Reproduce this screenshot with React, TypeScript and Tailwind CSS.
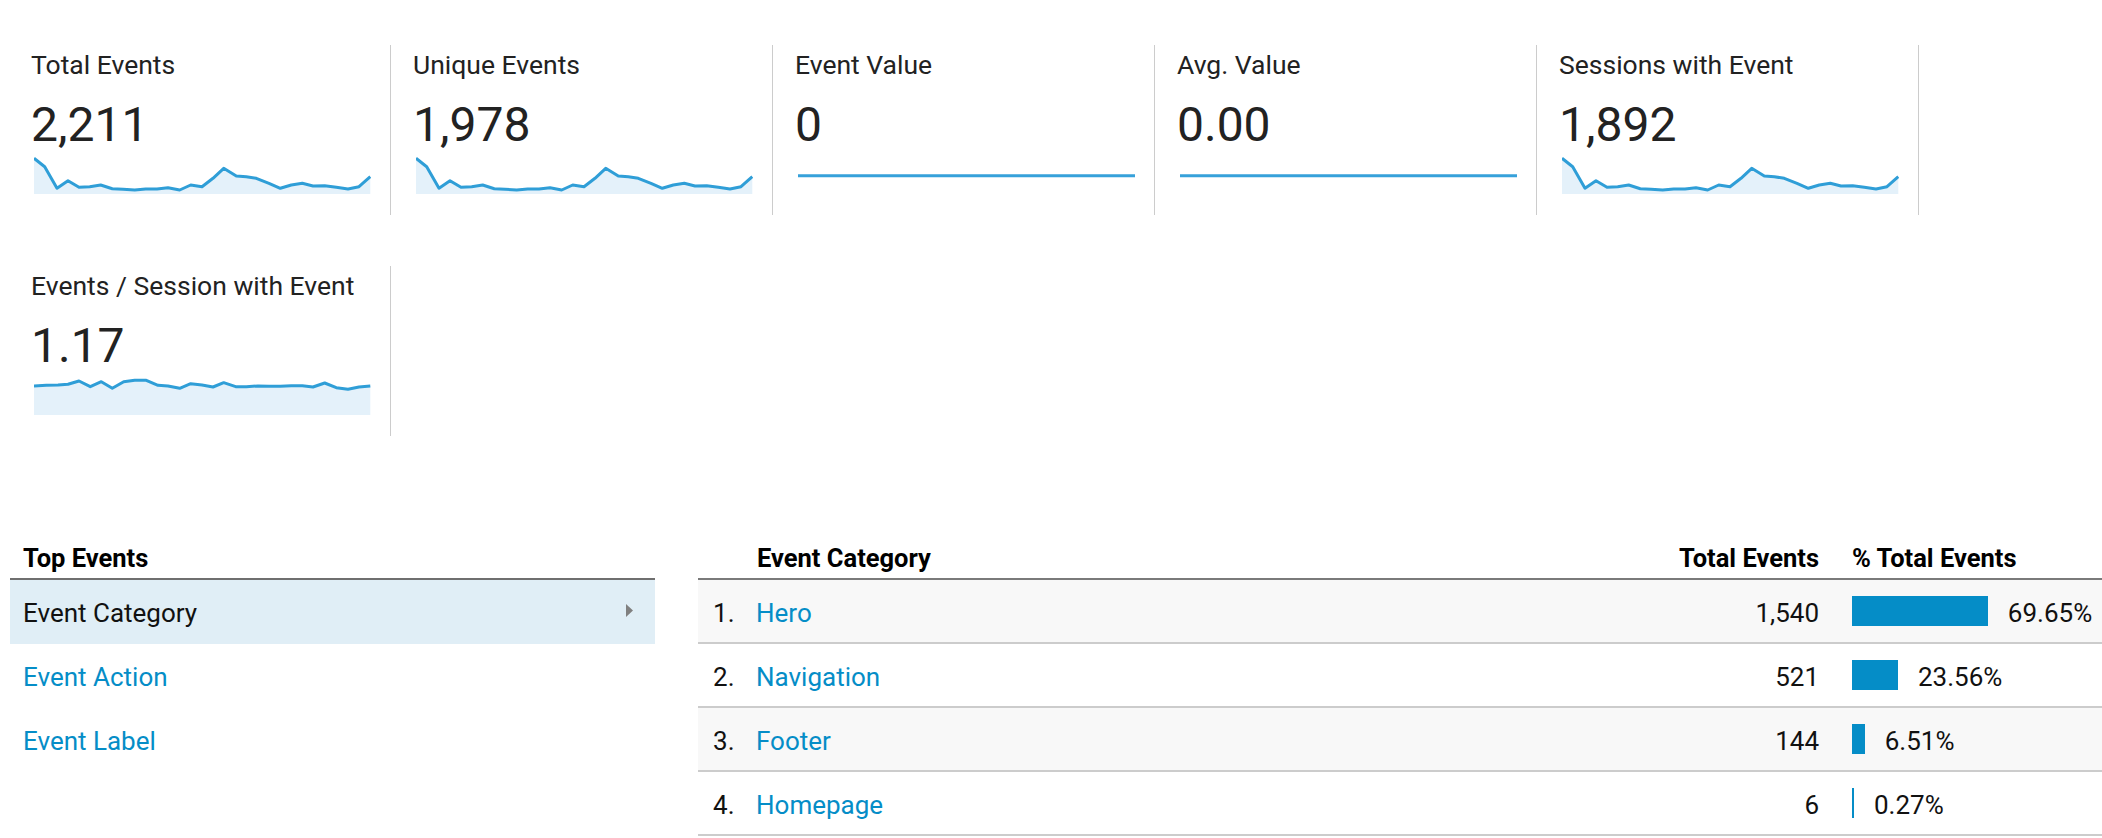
import React from 'react';

type Pt = [number, number];

// sampled from the reference at 3x, origin of the spark box at (103, 342)
const EVENTS_TREND: Pt[] = [
  [103, 355], [135, 380], [172, 445], [205, 422], [238, 442], [270, 440], [303, 435],
  [338, 446], [370, 448], [405, 450], [438, 447], [472, 447], [505, 443], [540, 450],
  [573, 435], [607, 440], [640, 415], [672, 385], [710, 408], [740, 410], [770, 415],
  [808, 430], [842, 445], [875, 435], [908, 430], [940, 438], [975, 437], [1010, 442],
  [1045, 447], [1078, 440], [1112, 410],
];

const PER_SESSION_TREND: Pt[] = [
  [103, 375], [140, 373], [175, 372], [205, 370], [238, 360], [272, 377], [305, 362],
  [338, 382], [372, 362], [405, 358], [440, 358], [475, 373], [505, 375], [540, 382],
  [573, 368], [607, 372], [640, 378], [672, 365], [708, 377], [740, 377], [775, 375],
  [808, 376], [842, 376], [875, 374], [908, 374], [940, 378], [975, 366], [1010, 380],
  [1045, 385], [1078, 378], [1112, 375],
];

interface Metric {
  label: string;
  value: string;
  trend?: Pt[];
}

const METRICS: Metric[] = [
  { label: 'Total Events', value: '2,211', trend: EVENTS_TREND },
  { label: 'Unique Events', value: '1,978', trend: EVENTS_TREND },
  { label: 'Event Value', value: '0' },
  { label: 'Avg. Value', value: '0.00' },
  { label: 'Sessions with Event', value: '1,892', trend: EVENTS_TREND },
  { label: 'Events / Session with Event', value: '1.17', trend: PER_SESSION_TREND },
];

const ROWS = [
  { name: 'Hero', total: '1,540', pct: 69.65 },
  { name: 'Navigation', total: '521', pct: 23.56 },
  { name: 'Footer', total: '144', pct: 6.51 },
  { name: 'Homepage', total: '6', pct: 0.27 },
];

function Sparkline({ trend }: { trend?: Pt[] }) {
  if (!trend) {
    return (
      <svg width="337" height="40" viewBox="0 0 337 40" className="block ml-[3px]">
        <line x1="0" y1="21.7" x2="337" y2="21.7" stroke="#36a1da" strokeWidth="3" />
      </svg>
    );
  }
  const pts = trend.map(([x, y]) => [(x - 103) / 3, (y - 342) / 3]);
  const line = pts.map(([x, y], i) => `${i === 0 ? 'M' : 'L'}${x.toFixed(1)},${y.toFixed(1)}`).join(' ');
  const last = pts[pts.length - 1];
  const area = `${line} L${last[0].toFixed(1)},40 L0,40 Z`;
  return (
    <svg width="337" height="40" viewBox="0 0 337 40" className="block ml-[3px]">
      <path d={area} fill="#e4f1fa" />
      <path d={line} fill="none" stroke="#2f9ed7" strokeWidth="3" strokeLinejoin="round" />
    </svg>
  );
}

function MetricCard({ metric }: { metric: Metric }) {
  return (
    <div className="w-[382px] h-[170px] border-r border-[#cccccc] pl-[22px] pt-[5px]">
      <div className="text-[26.5px] leading-[30px] text-[#222222]">{metric.label}</div>
      <div className="mt-[17px] text-[48px] leading-[56px] text-[#222222]">{metric.value}</div>
      <div className="mt-[1px]">
        <Sparkline trend={metric.trend} />
      </div>
    </div>
  );
}

export default function App() {
  return (
    <div className="w-[2102px] h-[838px] overflow-hidden bg-white font-[Roboto,sans-serif] pl-[9px] pt-[45px]">
      <div className="flex flex-wrap gap-y-[51px]">
        {METRICS.map((m) => (
          <MetricCard key={m.label} metric={m} />
        ))}
      </div>

      <div className="mt-[106px] flex gap-[43px] pl-[1px]">
        {/* left: dimension picker */}
        <div className="w-[645px] shrink-0">
          <div className="h-[38px] pt-[1px] border-b-2 border-[#6f6f6f] pl-[13px] text-[25.5px] leading-[30px] font-bold text-black">
            Top Events
          </div>
          <div className="h-[64px] pt-[2px] flex items-center justify-between bg-[#e0eef6] pl-[13px] pr-[22px]">
            <span className="text-[26px] leading-[30px] text-[#111111]">Event Category</span>
            <svg width="7" height="13" viewBox="0 0 7 13" className="block -mt-[6px]">
              <polygon points="0,0 7,6.5 0,13" fill="#808080" />
            </svg>
          </div>
          <div className="h-[64px] pt-[2px] flex items-center pl-[13px]">
            <span className="text-[26px] leading-[30px] text-[#058dc7]">Event Action</span>
          </div>
          <div className="h-[64px] pt-[2px] flex items-center pl-[13px]">
            <span className="text-[26px] leading-[30px] text-[#058dc7]">Event Label</span>
          </div>
        </div>

        {/* right: report table */}
        <div className="flex-1 min-w-0">
          <div className="h-[38px] pt-[1px] border-b-2 border-[#7a7a7a] flex text-[25.5px] leading-[30px] font-bold text-black">
            <div className="w-[59px] shrink-0" />
            <div className="flex-1">Event Category</div>
            <div className="w-[160px] shrink-0 text-right">Total Events</div>
            <div className="w-[283px] shrink-0 pl-[33px]">% Total Events</div>
          </div>
          {ROWS.map((row, i) => (
            <div
              key={row.name}
              className={`h-[64px] pt-[4px] border-b-2 border-[#cccccc] flex items-center text-[26px] leading-[30px] ${
                i % 2 === 0 ? 'bg-[#f8f8f8]' : 'bg-white'
              }`}
            >
              <div className="w-[58px] shrink-0 pl-[15px] text-[#111111]">{i + 1}.</div>
              <div className="flex-1 text-[#058dc7]">{row.name}</div>
              <div className="w-[160px] shrink-0 text-right text-[#111111]">{row.total}</div>
              <div className="w-[283px] shrink-0 pl-[33px] flex items-center text-[#111111]">
                <div
                  className="h-[30px] bg-[#058dc7] mr-[20px] -mt-[4px] shrink-0"
                  style={{ width: `${Math.max(2, (row.pct / 100) * 195)}px` }}
                />
                <span>{row.pct.toFixed(2)}%</span>
              </div>
            </div>
          ))}
        </div>
      </div>
    </div>
  );
}
